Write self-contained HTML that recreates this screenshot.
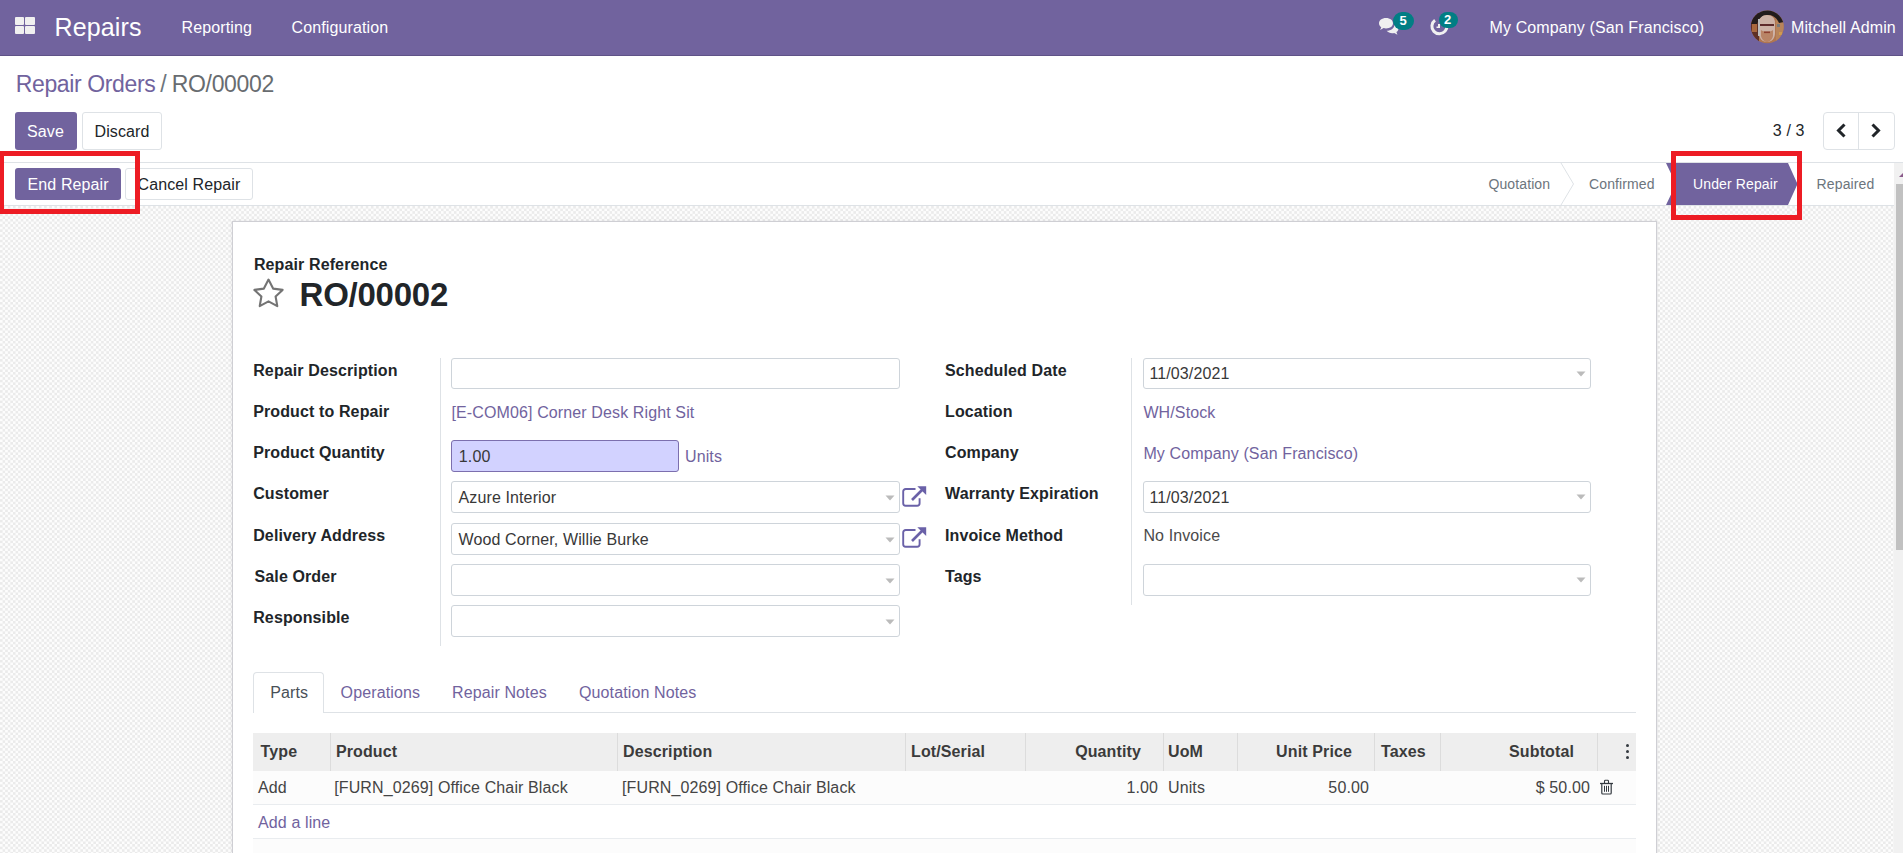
<!DOCTYPE html>
<html><head><meta charset="utf-8"><title>Repair Orders / RO/00002</title>
<style>
html,body{margin:0;padding:0;}
body{width:1903px;height:853px;overflow:hidden;position:relative;background:#fff;font-family:"Liberation Sans",sans-serif;}
.t{position:absolute;white-space:nowrap;letter-spacing:0.12px;}
.b{position:absolute;}
</style></head><body>
<div class="b" style="left:0px;top:0px;width:1903px;height:56px;background:#71639e;border-bottom:1px solid #5f5287;box-sizing:border-box;"></div>
<div class="b" style="left:15px;top:17px;width:9px;height:8px;background:#f0f0f0;border-radius:1px;"></div>
<div class="b" style="left:25px;top:17px;width:10px;height:8px;background:#f0f0f0;border-radius:1px;"></div>
<div class="b" style="left:15px;top:26px;width:9px;height:8px;background:#f0f0f0;border-radius:1px;"></div>
<div class="b" style="left:25px;top:26px;width:10px;height:8px;background:#f0f0f0;border-radius:1px;"></div>
<div class="t" style="left:54.6px;top:11.63px;font-size:25px;line-height:31px;color:#fff;letter-spacing:0.12px;">Repairs</div>
<div class="t" style="left:181.5px;top:18.35px;font-size:16px;line-height:20px;color:#fff;">Reporting</div>
<div class="t" style="left:291.6px;top:18.35px;font-size:16px;line-height:20px;color:#fff;">Configuration</div>
<svg class="b" style="left:1378px;top:17px" width="22" height="19" viewBox="0 0 22 19"><path fill="#f0f0f0" d="M8 1C3.8 1 1 3.4 1 6.3c0 1.6.9 3 2.3 4L2.2 13l3.4-1.9c.8.2 1.6.3 2.4.3 4.2 0 7-2.4 7-5.2S12.2 1 8 1z"/><path fill="#f0f0f0" d="M16.4 6.5c.1.3.1.6.1 1 0 3.5-3.4 6.2-7.8 6.3 1.2 1.5 3.2 2.4 5.5 2.4.7 0 1.4-.1 2-.3l3.2 1.8-1-2.6c1.3-.9 2.1-2.2 2.1-3.7 0-2-1.6-3.9-4.1-4.9z"/></svg>
<div class="b" style="left:1393px;top:11.5px;width:21px;height:18.5px;background:#017e84;border-radius:10px;"></div>
<div class="t" style="left:1399.5px;top:13.29px;font-size:13px;line-height:16px;font-weight:bold;color:#fff;">5</div>
<svg class="b" style="left:1429px;top:16px" width="20" height="20" viewBox="0 0 20 20"><path fill="none" stroke="#f0f0f0" stroke-width="3" d="M6 4.2A7.5 7.5 0 1 0 14.5 4"/><path fill="#f0f0f0" d="M9 8h2v4H7.5v-1.6H9z"/></svg>
<div class="b" style="left:1438.5px;top:11.5px;width:19.5px;height:16.5px;background:#017e84;border-radius:9px;"></div>
<div class="t" style="left:1444px;top:12.49px;font-size:13px;line-height:16px;font-weight:bold;color:#fff;">2</div>
<div class="t" style="left:1489.5px;top:18.35px;font-size:16px;line-height:20px;color:#fff;">My Company (San Francisco)</div>
<svg class="b" style="left:1750px;top:10px" width="35" height="34" viewBox="0 0 35 34"><defs><clipPath id="av"><circle cx="17.3" cy="16.8" r="16.4"/></clipPath></defs><g clip-path="url(#av)"><rect width="35" height="34" fill="#b07650"/><rect x="0" y="0" width="9" height="34" fill="#5e3026"/><rect x="2" y="14" width="5" height="8" fill="#a8683e"/><rect x="26" y="6" width="9" height="28" fill="#b8845a"/><rect x="27" y="14" width="3" height="3" fill="#7a7a7a"/><rect x="29" y="22" width="3" height="3" fill="#d09a50"/><path d="M1 14C2 4 9 0 18 0s15 4 16 12l-5 1c-2-5-6-8-11-8s-9 3-11 9z" fill="#221c1c"/><path d="M9 13c0-5 3-8 8-8s8 3 8 8v10c0 5-3 9-8 9s-8-4-8-9z" fill="#cdb2a6"/><path d="M11 20c2 2 10 2 12 0v6c-1 4-4 6-6 6s-5-2-6-6z" fill="#b98466"/><rect x="10" y="14" width="14" height="2" fill="#5e2a2a"/><rect x="14" y="21.5" width="6" height="1.6" fill="#8e4030"/><rect x="8" y="9" width="2" height="17" fill="#bdbdbd"/></g></svg>
<div class="t" style="left:1791px;top:18.05px;font-size:16px;line-height:20px;color:#fff;">Mitchell Admin</div>
<div class="b" style="left:0px;top:56px;width:1903px;height:107px;background:#fff;"></div>
<div class="t" style="left:15.8px;top:69.73px;font-size:23px;line-height:29px;color:#71639e;letter-spacing:-0.38px;">Repair Orders</div>
<div class="t" style="left:160.3px;top:69.73px;font-size:23px;line-height:29px;color:#6c757d;">/</div>
<div class="t" style="left:171.8px;top:69.73px;font-size:23px;line-height:29px;color:#686c70;letter-spacing:-0.35px;">RO/00002</div>
<div class="b" style="left:15px;top:112px;width:62px;height:38px;background:#71639e;border-radius:3px;"></div>
<div class="t" style="left:27px;top:122.25px;font-size:16px;line-height:20px;color:#fff;">Save</div>
<div class="b" style="left:82px;top:112px;width:80px;height:38px;background:#fff;border:1px solid #dee2e6;border-radius:3px;box-sizing:border-box;"></div>
<div class="t" style="left:94.5px;top:122.25px;font-size:16px;line-height:20px;color:#212529;">Discard</div>
<div class="t" style="left:1772.8px;top:121.05px;font-size:16px;line-height:20px;color:#212529;">3 / 3</div>
<div class="b" style="left:1823px;top:112px;width:71.5px;height:38px;background:#fff;border:1px solid #dee2e6;border-radius:4px;box-sizing:border-box;"></div>
<div class="b" style="left:1858px;top:112px;width:1px;height:38px;background:#dee2e6;"></div>
<svg class="b" style="left:1834px;top:122px" width="14" height="17" viewBox="0 0 14 17"><path d="M10.5 2.5L4.5 8.5l6 6" fill="none" stroke="#212529" stroke-width="3"/></svg>
<svg class="b" style="left:1869px;top:122px" width="14" height="17" viewBox="0 0 14 17"><path d="M3.5 2.5l6 6-6 6" fill="none" stroke="#212529" stroke-width="3"/></svg>
<div class="b" style="left:0px;top:162px;width:1903px;height:44px;background:#fff;border-top:1px solid #dee2e6;border-bottom:1px solid #dee2e6;box-sizing:border-box;"></div>
<div class="b" style="left:15px;top:168px;width:106px;height:32px;background:#71639e;border-radius:3px;"></div>
<div class="t" style="left:27.5px;top:175.25px;font-size:16px;line-height:20px;color:#fff;">End Repair</div>
<div class="b" style="left:125px;top:168px;width:128px;height:32px;background:#fff;border:1px solid #dee2e6;border-radius:3px;box-sizing:border-box;"></div>
<div class="t" style="left:137.5px;top:175.25px;font-size:16px;line-height:20px;color:#212529;">Cancel Repair</div>
<div class="t" style="left:1488.4px;top:175.35px;font-size:14px;line-height:18px;color:#6c757d;">Quotation</div>
<div class="t" style="left:1589px;top:175.35px;font-size:14px;line-height:18px;color:#6c757d;">Confirmed</div>
<div class="t" style="left:1816.6px;top:175.35px;font-size:14px;line-height:18px;color:#6c757d;">Repaired</div>
<svg class="b" style="left:1555px;top:163px" width="25" height="42" viewBox="0 0 25 42"><path d="M6 0l12.5 21L6 42" fill="none" stroke="#dee2e6" stroke-width="1"/></svg>
<svg class="b" style="left:1666px;top:163px" width="136" height="42" viewBox="0 0 136 42"><path d="M0 0H122L131.5 21L122 42H0L10 21z" fill="#71639e"/></svg>
<div class="t" style="left:1693px;top:175.35px;font-size:14px;line-height:18px;color:#fff;">Under Repair</div>
<div class="b" style="left:0px;top:206px;width:1894px;height:647px;background-color:#fcfcfc;background-image:repeating-conic-gradient(#ebebeb 0 25%, #fdfdfd 0 50%);background-size:5.2px 5.2px;"></div>
<div class="b" style="left:1894px;top:163px;width:9px;height:690px;background:#f1f1f1;"></div>
<div class="b" style="left:1896px;top:184px;width:7px;height:366px;background:#c1c1c1;"></div>
<svg class="b" style="left:1899px;top:172px" width="4" height="6" viewBox="0 0 4 6"><path d="M0 5L4 1V5z" fill="#8a5a8a"/></svg>
<div class="b" style="left:232px;top:221px;width:1425px;height:679px;background:#fff;border:1px solid #cfcfd4;box-sizing:border-box;box-shadow:0 0 3px rgba(0,0,40,0.10);"></div>
<div class="t" style="left:253.9px;top:255.05px;font-size:16px;line-height:20px;font-weight:bold;color:#212529;">Repair Reference</div>
<svg class="b" style="left:252px;top:277px" width="33" height="32" viewBox="0 0 33 32"><path d="M16.5 2.6L21.1 11.6L30.6 12.9L23.6 19.5L25.3 29.1L16.5 24.4L7.7 29.1L9.4 19.5L2.4 12.9L11.9 11.6Z" fill="none" stroke="#747474" stroke-width="2.1" stroke-linejoin="round"/></svg>
<div class="t" style="left:299.6px;top:274.06px;font-size:33px;line-height:41px;font-weight:bold;color:#212529;letter-spacing:-0.25px;">RO/00002</div>
<div class="t" style="left:253.2px;top:361.25px;font-size:16px;line-height:20px;font-weight:bold;color:#212529;">Repair Description</div>
<div class="t" style="left:253.2px;top:402.25px;font-size:16px;line-height:20px;font-weight:bold;color:#212529;">Product to Repair</div>
<div class="t" style="left:253.2px;top:443.25px;font-size:16px;line-height:20px;font-weight:bold;color:#212529;">Product Quantity</div>
<div class="t" style="left:253.2px;top:484.25px;font-size:16px;line-height:20px;font-weight:bold;color:#212529;">Customer</div>
<div class="t" style="left:253.2px;top:525.75px;font-size:16px;line-height:20px;font-weight:bold;color:#212529;">Delivery Address</div>
<div class="t" style="left:254.5px;top:566.75px;font-size:16px;line-height:20px;font-weight:bold;color:#212529;">Sale Order</div>
<div class="t" style="left:253.2px;top:607.75px;font-size:16px;line-height:20px;font-weight:bold;color:#212529;">Responsible</div>
<div class="t" style="left:945px;top:361.25px;font-size:16px;line-height:20px;font-weight:bold;color:#212529;">Scheduled Date</div>
<div class="t" style="left:945px;top:402.25px;font-size:16px;line-height:20px;font-weight:bold;color:#212529;">Location</div>
<div class="t" style="left:945px;top:443.25px;font-size:16px;line-height:20px;font-weight:bold;color:#212529;">Company</div>
<div class="t" style="left:945px;top:484.25px;font-size:16px;line-height:20px;font-weight:bold;color:#212529;">Warranty Expiration</div>
<div class="t" style="left:945px;top:525.75px;font-size:16px;line-height:20px;font-weight:bold;color:#212529;">Invoice Method</div>
<div class="t" style="left:945px;top:566.75px;font-size:16px;line-height:20px;font-weight:bold;color:#212529;">Tags</div>
<div class="b" style="left:440px;top:358px;width:1px;height:288px;background:#dee2e6;"></div>
<div class="b" style="left:1131px;top:358px;width:1px;height:247px;background:#dee2e6;"></div>
<div class="b" style="left:451px;top:358px;width:449px;height:31px;background:#fff;border:1px solid #ced4da;border-radius:3px;box-sizing:border-box;"></div>
<div class="t" style="left:451.5px;top:402.75px;font-size:16px;line-height:20px;color:#71639e;">[E-COM06] Corner Desk Right Sit</div>
<div class="b" style="left:451px;top:440px;width:228px;height:32px;background:#d2d2ff;border:1px solid #7c6fae;border-radius:3px;box-sizing:border-box;"></div>
<div class="t" style="left:458.8px;top:446.75px;font-size:16px;line-height:20px;color:#383838;">1.00</div>
<div class="t" style="left:685px;top:447.25px;font-size:16px;line-height:20px;color:#71639e;">Units</div>
<div class="b" style="left:451px;top:481px;width:449px;height:31.5px;background:#fff;border:1px solid #ced4da;border-radius:3px;box-sizing:border-box;"></div>
<svg class="b" style="left:885px;top:494.5px" width="10" height="6" viewBox="0 0 10 6"><path d="M0.5 0.5h9L5 5.5z" fill="#bbb"/></svg>
<div class="t" style="left:458.5px;top:487.75px;font-size:16px;line-height:20px;color:#383838;">Azure Interior</div>
<div class="b" style="left:451px;top:523px;width:449px;height:31.5px;background:#fff;border:1px solid #ced4da;border-radius:3px;box-sizing:border-box;"></div>
<svg class="b" style="left:885px;top:536.5px" width="10" height="6" viewBox="0 0 10 6"><path d="M0.5 0.5h9L5 5.5z" fill="#bbb"/></svg>
<div class="t" style="left:458.5px;top:529.75px;font-size:16px;line-height:20px;color:#383838;">Wood Corner, Willie Burke</div>
<div class="b" style="left:451px;top:564px;width:449px;height:31.5px;background:#fff;border:1px solid #ced4da;border-radius:3px;box-sizing:border-box;"></div>
<svg class="b" style="left:885px;top:577.5px" width="10" height="6" viewBox="0 0 10 6"><path d="M0.5 0.5h9L5 5.5z" fill="#bbb"/></svg>
<div class="b" style="left:451px;top:605px;width:449px;height:31.5px;background:#fff;border:1px solid #ced4da;border-radius:3px;box-sizing:border-box;"></div>
<svg class="b" style="left:885px;top:618.5px" width="10" height="6" viewBox="0 0 10 6"><path d="M0.5 0.5h9L5 5.5z" fill="#bbb"/></svg>
<svg class="b" style="left:902px;top:486px" width="26" height="22" viewBox="0 0 26 22"><path d="M13.5 3H3.7A2.5 2.5 0 0 0 1.2 5.5V17.2A2.5 2.5 0 0 0 3.7 19.7H15.1A2.5 2.5 0 0 0 17.6 17.2V12.3" fill="none" stroke="#6a61a8" stroke-width="1.9"/><path d="M10 14L20.5 3.5" stroke="#6a61a8" stroke-width="2.7"/><path d="M15.3 0.2H24.2V9z" fill="#6a61a8"/></svg>
<svg class="b" style="left:902px;top:527px" width="26" height="22" viewBox="0 0 26 22"><path d="M13.5 3H3.7A2.5 2.5 0 0 0 1.2 5.5V17.2A2.5 2.5 0 0 0 3.7 19.7H15.1A2.5 2.5 0 0 0 17.6 17.2V12.3" fill="none" stroke="#6a61a8" stroke-width="1.9"/><path d="M10 14L20.5 3.5" stroke="#6a61a8" stroke-width="2.7"/><path d="M15.3 0.2H24.2V9z" fill="#6a61a8"/></svg>
<div class="b" style="left:1143px;top:358px;width:448px;height:31px;background:#fff;border:1px solid #ced4da;border-radius:3px;box-sizing:border-box;"></div>
<svg class="b" style="left:1576px;top:370.5px" width="10" height="6" viewBox="0 0 10 6"><path d="M0.5 0.5h9L5 5.5z" fill="#bbb"/></svg>
<div class="t" style="left:1149.4px;top:363.95px;font-size:16px;line-height:20px;color:#383838;">11/03/2021</div>
<div class="t" style="left:1143.4px;top:403.25px;font-size:16px;line-height:20px;color:#71639e;">WH/Stock</div>
<div class="t" style="left:1143.4px;top:444.25px;font-size:16px;line-height:20px;color:#71639e;">My Company (San Francisco)</div>
<div class="b" style="left:1143px;top:481px;width:448px;height:31.5px;background:#fff;border:1px solid #ced4da;border-radius:3px;box-sizing:border-box;"></div>
<svg class="b" style="left:1576px;top:494px" width="10" height="6" viewBox="0 0 10 6"><path d="M0.5 0.5h9L5 5.5z" fill="#bbb"/></svg>
<div class="t" style="left:1149.4px;top:487.75px;font-size:16px;line-height:20px;color:#383838;">11/03/2021</div>
<div class="t" style="left:1143.4px;top:526.25px;font-size:16px;line-height:20px;color:#4a4a4a;">No Invoice</div>
<div class="b" style="left:1143px;top:564px;width:448px;height:31.5px;background:#fff;border:1px solid #ced4da;border-radius:3px;box-sizing:border-box;"></div>
<svg class="b" style="left:1576px;top:577px" width="10" height="6" viewBox="0 0 10 6"><path d="M0.5 0.5h9L5 5.5z" fill="#bbb"/></svg>
<div class="b" style="left:253px;top:712px;width:1383px;height:1px;background:#dee2e6;"></div>
<div class="b" style="left:253px;top:671.5px;width:71px;height:41.5px;background:#fff;border:1px solid #dee2e6;border-bottom:none;border-radius:4px 4px 0 0;box-sizing:border-box;"></div>
<div class="t" style="left:270.2px;top:682.65px;font-size:16px;line-height:20px;color:#495057;">Parts</div>
<div class="t" style="left:340.6px;top:682.65px;font-size:16px;line-height:20px;color:#71639e;">Operations</div>
<div class="t" style="left:452px;top:682.65px;font-size:16px;line-height:20px;color:#71639e;">Repair Notes</div>
<div class="t" style="left:579px;top:682.65px;font-size:16px;line-height:20px;color:#71639e;">Quotation Notes</div>
<div class="b" style="left:253px;top:733px;width:1383px;height:37.5px;background:#eeeeee;"></div>
<div class="b" style="left:330px;top:733px;width:1px;height:37.5px;background:#dcdcdc;"></div>
<div class="b" style="left:617px;top:733px;width:1px;height:37.5px;background:#dcdcdc;"></div>
<div class="b" style="left:905px;top:733px;width:1px;height:37.5px;background:#dcdcdc;"></div>
<div class="b" style="left:1025px;top:733px;width:1px;height:37.5px;background:#dcdcdc;"></div>
<div class="b" style="left:1163px;top:733px;width:1px;height:37.5px;background:#dcdcdc;"></div>
<div class="b" style="left:1237px;top:733px;width:1px;height:37.5px;background:#dcdcdc;"></div>
<div class="b" style="left:1374px;top:733px;width:1px;height:37.5px;background:#dcdcdc;"></div>
<div class="b" style="left:1440px;top:733px;width:1px;height:37.5px;background:#dcdcdc;"></div>
<div class="b" style="left:1597px;top:733px;width:1px;height:37.5px;background:#dcdcdc;"></div>
<div class="t" style="left:260.6px;top:741.65px;font-size:16px;line-height:20px;font-weight:bold;color:#3b3b3b;">Type</div>
<div class="t" style="left:335.9px;top:741.65px;font-size:16px;line-height:20px;font-weight:bold;color:#3b3b3b;">Product</div>
<div class="t" style="left:623px;top:741.65px;font-size:16px;line-height:20px;font-weight:bold;color:#3b3b3b;">Description</div>
<div class="t" style="left:911px;top:741.65px;font-size:16px;line-height:20px;font-weight:bold;color:#3b3b3b;">Lot/Serial</div>
<div class="t" style="right:762px;top:741.65px;font-size:16px;line-height:20px;font-weight:bold;color:#3b3b3b;">Quantity</div>
<div class="t" style="left:1168px;top:741.65px;font-size:16px;line-height:20px;font-weight:bold;color:#3b3b3b;">UoM</div>
<div class="t" style="right:551px;top:741.65px;font-size:16px;line-height:20px;font-weight:bold;color:#3b3b3b;">Unit Price</div>
<div class="t" style="left:1381px;top:741.65px;font-size:16px;line-height:20px;font-weight:bold;color:#3b3b3b;">Taxes</div>
<div class="t" style="right:329px;top:741.65px;font-size:16px;line-height:20px;font-weight:bold;color:#3b3b3b;">Subtotal</div>
<div class="b" style="left:1626px;top:744px;width:3px;height:3px;background:#343a40;border-radius:50%;"></div>
<div class="b" style="left:1626px;top:750px;width:3px;height:3px;background:#343a40;border-radius:50%;"></div>
<div class="b" style="left:1626px;top:756px;width:3px;height:3px;background:#343a40;border-radius:50%;"></div>
<div class="b" style="left:253px;top:770.5px;width:1383px;height:34.0px;background:#fcfcfc;border-bottom:1px solid #e9ecef;box-sizing:border-box;"></div>
<div class="t" style="left:257.9px;top:777.85px;font-size:16px;line-height:20px;color:#444;">Add</div>
<div class="t" style="left:334.2px;top:777.85px;font-size:16px;line-height:20px;color:#444;">[FURN_0269] Office Chair Black</div>
<div class="t" style="left:622px;top:777.85px;font-size:16px;line-height:20px;color:#444;">[FURN_0269] Office Chair Black</div>
<div class="t" style="right:745px;top:777.85px;font-size:16px;line-height:20px;color:#444;">1.00</div>
<div class="t" style="left:1168px;top:777.85px;font-size:16px;line-height:20px;color:#444;">Units</div>
<div class="t" style="right:534px;top:777.85px;font-size:16px;line-height:20px;color:#444;">50.00</div>
<div class="t" style="right:313px;top:777.85px;font-size:16px;line-height:20px;color:#444;">$ 50.00</div>
<svg class="b" style="left:1599px;top:779px" width="15" height="16" viewBox="0 0 15 16"><path d="M1 4.5h13" stroke="#343a40" stroke-width="1.3"/><path d="M5.5 4.5V2.2q0-.9.9-.9h2.2q.9 0 .9.9v2.3" fill="none" stroke="#343a40" stroke-width="1.1"/><path d="M2.8 4.5v9.6q0 .9.9.9h7.6q.9 0 .9-.9V4.5" fill="none" stroke="#343a40" stroke-width="1.2"/><path d="M5.5 6.8v6M7.5 6.8v6M9.5 6.8v6" stroke="#343a40" stroke-width="1"/></svg>
<div class="b" style="left:253px;top:804.5px;width:1383px;height:34.0px;background:#fff;border-bottom:1px solid #e9ecef;box-sizing:border-box;"></div>
<div class="t" style="left:258px;top:813.25px;font-size:16px;line-height:20px;color:#71639e;">Add a line</div>
<div class="b" style="left:253px;top:838.5px;width:1383px;height:14.5px;background:#fcfcfc;"></div>
<div class="b" style="left:-1px;top:151px;width:141px;height:63px;border:5px solid #ed1c24;box-sizing:border-box;"></div>
<div class="b" style="left:1671px;top:151px;width:131px;height:69px;border:5px solid #ed1c24;box-sizing:border-box;"></div>
</body></html>
